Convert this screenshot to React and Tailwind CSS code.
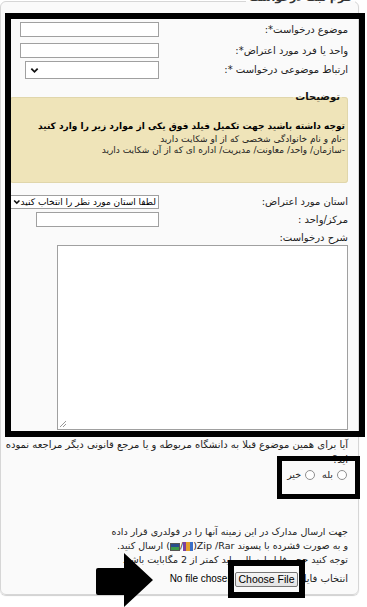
import React from "react";

const Chevron = ({ className }) => (
  <svg viewBox="0 0 10 7" className={className}>
    <path d="M1.5 1.5l3.5 3.5 3.5-3.5" fill="none" stroke="#111" strokeWidth="2" />
  </svg>
);

const Radio = () => (
  <span className="inline-block w-[10px] h-[10px] rounded-full border border-[#8f8f8f] bg-white shrink-0" />
);

const Row = ({ label, children, className = "" }) => (
  <div className={"flex items-center " + className}>
    <label className="w-[199px] shrink-0 pr-[10px] whitespace-nowrap">{label}</label>
    {children}
  </div>
);

export default function App() {
  return (
    <div
      dir="rtl"
      className="relative w-[367px] h-[607px] overflow-hidden bg-white font-['DejaVu_Sans',sans-serif] text-[10px] leading-[14px] text-[#222]"
    >
      <fieldset className="-mt-[10px] mr-[8px] w-[359px] min-w-0 h-[605px] border border-[#d6d6d6] rounded-[6px] bg-[#fafafa] shadow-[0_1px_1px_#d0d0d0]">
        <legend className="mr-[3px] px-[3px] pb-[6px] text-[11px] leading-[16px] font-bold text-[#333]">
          فرم ثبت درخواست
        </legend>

        <Row label="موضوع درخواست*:" className="mt-[10px] h-[15px]">
          <input className="w-[139px] h-[15px] border border-[#a0a0a0] bg-white" />
        </Row>
        <Row label="واحد یا فرد مورد اعتراض*:" className="mt-[6px] h-[15px]">
          <input className="w-[139px] h-[15px] border border-[#a0a0a0] bg-white" />
        </Row>
        <Row label="ارتباط موضوعی درخواست *:" className="mt-[3px] h-[18px]">
          <div className="w-[134px] h-[18px] border border-[#a0a0a0] bg-white flex items-center justify-end pl-[4px]">
            <Chevron className="w-[9px] h-[7px]" />
          </div>
        </Row>

        <fieldset className="mt-[11px] mr-[10px] w-[338px] min-w-0 border border-[#e0d6ab] rounded-[3px] bg-[#efe4b9] pr-[2px] pb-[26px]">
          <legend className="mr-[3px] px-[2px] font-bold text-[10px] leading-[14px] text-[#111]">
            توضیحات
          </legend>
          <div className="mt-[15px] font-bold text-[9px] leading-[15px] text-black whitespace-nowrap">
            توجه داشته باشید جهت تکمیل فیلد فوق یکی از موارد زیر را وارد کنید
          </div>
          <div className="text-[9px] leading-[11px] text-[#222]">
            -نام و نام خانوادگی شخصی که از او شکایت دارید
          </div>
          <div className="text-[9px] leading-[11px] text-[#222]">
            -سازمان/ واحد/ معاونت/ مدیریت/ اداره ای که از آن شکایت دارید
          </div>
        </fieldset>

        <Row label="استان مورد اعتراض:" className="mt-[12px] h-[14px]">
          <div className="w-[149px] h-[14px] border border-[#a0a0a0] bg-white flex items-center justify-between pr-[2px] pl-[2px]">
            <span className="text-[9px] leading-[12px] whitespace-nowrap text-black">
              لطفا استان مورد نظر را انتخاب کنید
            </span>
            <Chevron className="w-[8px] h-[6px]" />
          </div>
        </Row>
        <Row label="مرکز/واحد :" className="mt-[3px] h-[15px]">
          <input className="w-[123px] h-[15px] border border-[#a0a0a0] bg-white" />
        </Row>
        <div className="mt-[4px] pr-[10px] h-[14px]">شرح درخواست:</div>
        <div className="mr-[10px] w-[291px] h-[185px] border border-[#a0a0a0] bg-white relative">
          <svg viewBox="0 0 8 8" className="absolute left-[1px] bottom-[1px] w-[8px] h-[8px]">
            <path d="M1 7L7 1M4 7l3-3" stroke="#999" strokeWidth="1" />
          </svg>
        </div>

        <div className="mt-[7px] pr-[10px] text-[10px] leading-[15px] whitespace-nowrap">
          آیا برای همین موضوع قبلا به دانشگاه مربوطه و یا مرجع قانونی دیگر مراجعه نموده
          <br />
          اید؟
        </div>
        <div className="pr-[11px] h-[15px] flex items-center gap-[4px] text-[9.5px]">
          <Radio />
          <span className="ml-[3px]">بله</span>
          <Radio />
          <span>خیر</span>
        </div>

        <div className="mt-[43px] mr-[10px] w-[213px] text-[9.5px] leading-[14px] text-[#222]">
          <div className="text-justify [text-align-last:justify] whitespace-nowrap">
            جهت ارسال مدارک در این زمینه آنها را در فولدری قرار داده
          </div>
          <div className="text-justify [text-align-last:justify] whitespace-nowrap">
            و به صورت فشرده با پسوند Zip /Rar(
            <span className="inline-block align-middle w-[10px] h-[9px] bg-[linear-gradient(90deg,#7b3fa0_0_33%,#e3a02c_33%_66%,#3a6fc8_66%)]" />
            /
            <span className="inline-block align-middle w-[10px] h-[8px] bg-[linear-gradient(180deg,#2a4d8c_0_50%,#3d9a4a_50%)] border border-[#555]" />
            ) ارسال کنید.
          </div>
          <div className="text-justify [text-align-last:justify] whitespace-nowrap">
            توجه کنید حجم فایل ارسالی باید کمتر از 2 مگابایت باشد.
          </div>
        </div>
        <div className="mt-[4px] h-[16px] flex items-center">
          <span className="w-[60px] shrink-0 pr-[10px] whitespace-nowrap">انتخاب فایل</span>
          <span className="w-[63px] h-[15px] shrink-0 flex items-center justify-center border border-[#767676] rounded-[2px] bg-[linear-gradient(#f5f5f5,#e3e3e3)] font-['Liberation_Sans',sans-serif] text-[10.5px] text-black">
            Choose File
          </span>
          <span dir="ltr" className="mr-[2px] font-['Liberation_Sans',sans-serif] text-[10px] text-black whitespace-nowrap">
            No file chosen
          </span>
        </div>
      </fieldset>

      {/* annotation overlays */}
      <div className="pointer-events-none absolute left-[5px] top-[13px] w-[360px] h-[424px] border-[6px] border-black" />
      <div className="pointer-events-none absolute left-[277px] top-[456px] w-[83px] h-[43px] border-[5px] border-black" />
      <div className="pointer-events-none absolute left-[228px] top-[560px] w-[77px] h-[38px] border-[6px] border-black" />
      <svg viewBox="0 0 60 54" className="pointer-events-none absolute left-[95px] top-[553px] w-[60px] h-[54px]">
        <path d="M1 17Q1 15 3 15H29V0L58 27L29 54V42H3Q1 42 1 40Z" fill="#000" />
      </svg>
    </div>
  );
}
